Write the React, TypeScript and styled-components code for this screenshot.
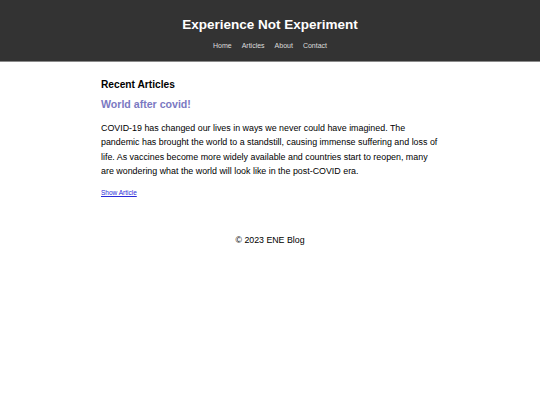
import React from "react";
import styled, { createGlobalStyle } from "styled-components";

const Global = createGlobalStyle`
  html, body { margin: 0; padding: 0; background: #fff; }
  body { font-family: "Liberation Sans", Arial, sans-serif; color: #000; }
`;

const Header = styled.header`
  background: #333;
  border-bottom: 1px solid #8a8a8a;
  padding: 17px 0 10px;
  display: flex;
  flex-direction: column;
  align-items: center;
`;

const Title = styled.h1`
  margin: 0;
  color: #fff;
  font-size: 13.5px;
  font-weight: bold;
  line-height: 16px;
`;

const Nav = styled.nav`
  display: flex;
  gap: 10px;
  margin-top: 8px;
`;

const NavLink = styled.a`
  color: #dddddd;
  font-size: 7px;
  text-decoration: none;
  line-height: 10px;
`;

const Main = styled.main`
  width: 338px;
  margin: 0 auto;
  padding-top: 17px;
`;

const SectionTitle = styled.h2`
  margin: 0;
  font-size: 10.2px;
  font-weight: bold;
  line-height: 12px;
`;

const ArticleTitle = styled.h3`
  margin: 6px 0 0;
  font-size: 10.6px;
  font-weight: bold;
  color: #7b79c2;
  line-height: 14px;
`;

const Body = styled.p`
  margin: 10px 0 0;
  font-size: 8.88px;
  line-height: 14.3px;
`;

const ShowLink = styled.a`
  display: inline-block;
  margin-top: 11px;
  font-size: 6.5px;
  line-height: 8px;
  color: #2a2ad8;
  text-decoration: underline;
`;

const Footer = styled.footer`
  text-align: center;
  font-size: 8.8px;
  line-height: 10px;
  margin-top: 36px;
`;

export default function App() {
  return (
    <>
      <Global />
      <Header>
        <Title>Experience Not Experiment</Title>
        <Nav>
          <NavLink href="#">Home</NavLink>
          <NavLink href="#">Articles</NavLink>
          <NavLink href="#">About</NavLink>
          <NavLink href="#">Contact</NavLink>
        </Nav>
      </Header>
      <Main>
        <SectionTitle>Recent Articles</SectionTitle>
        <ArticleTitle>World after covid!</ArticleTitle>
        <Body>
          COVID-19 has changed our lives in ways we never could have imagined. The pandemic has
          brought the world to a standstill, causing immense suffering and loss of life. As vaccines
          become more widely available and countries start to reopen, many are wondering what the
          world will look like in the post-COVID era.
        </Body>
        <ShowLink href="#">Show Article</ShowLink>
      </Main>
      <Footer>© 2023 ENE Blog</Footer>
    </>
  );
}
